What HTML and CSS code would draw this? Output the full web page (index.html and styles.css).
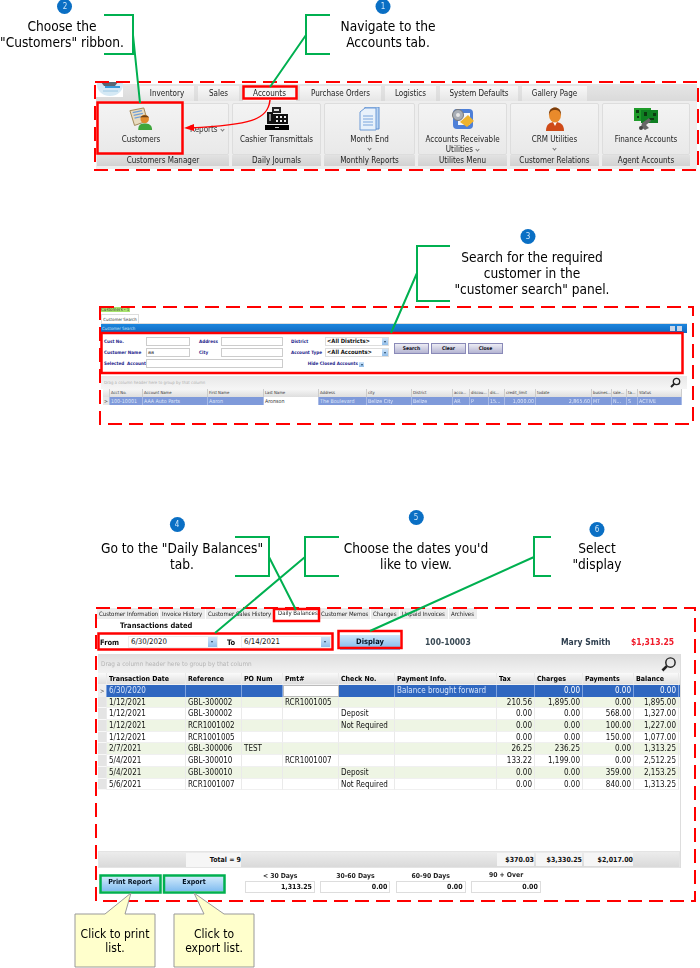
FILE: index.html
```html
<!DOCTYPE html>
<html lang="en">
<head>
<meta charset="utf-8">
<title>Customer Daily Balances</title>
<link rel="stylesheet" href="styles.css">
</head>
<body>
<main class="page">

<section class="ribbon">
  <div class="logo"><svg width="27" height="15" viewBox="0 0 27 15"><rect width="27" height="15" fill="#fff"/><ellipse cx="14" cy="3" rx="13" ry="11" fill="#d5e9f5"/><path d="M5 0h17l-3 4H8z" fill="#5a6672"/><path d="M9 5h15" stroke="#3b9ad8" stroke-width="2"/><path d="M7 9h15" stroke="#9cc7e2"/></svg></div>
  <div class="rtabs">
    <span class="rtab">Inventory</span><span class="rtab">Sales</span><span class="rtab active">Accounts</span><span class="rtab">Purchase Orders</span><span class="rtab">Logistics</span><span class="rtab">System Defaults</span><span class="rtab">Gallery Page</span>
  </div>
  <div class="groups">
    <div class="group">
      <div class="gmain split">
        <div class="gitem wide">
          <svg class="ico" viewBox="0 0 26 24"><path d="M1 3l15-3 4 14-14 5z" fill="#e9dcc0" stroke="#9c8250"/><path d="M4 5l10-2M5 8l10-2M6 11l9-2" stroke="#6f9fd8" stroke-width="1.3"/><circle cx="17" cy="12" r="4.6" fill="#e08a2c"/><path d="M12.5 11c0-4 9-4 9 0l-1-1h-7z" fill="#6d4215"/><path d="M10 24c0-6 3-7 7-7s8 1 8 7z" fill="#3fa63c"/></svg>
          <span class="glabel">Customers</span>
        </div>
        <span class="reports">Reports <i class="chev inl"></i></span>
      </div>
      <div class="gfoot">Customers Manager</div>
    </div>
    <div class="group">
      <div class="gmain"><div class="gitem">
        <svg class="ico" viewBox="0 0 24 24"><path d="M7 0h9v6H7z" fill="#222"/><path d="M9 2h5v2H9z" fill="#ddd"/><path d="M2 5h6v12H2zM8 7h15v10H8z" fill="#111"/><path d="M4 7h2v7H4z" fill="#888"/><path d="M11 9h2v2h-2zM15 9h2v2h-2zM19 9h2v2h-2zM11 13h2v2h-2zM15 13h2v2h-2zM19 13h2v2h-2z" fill="#eee"/><path d="M0 18h24v5H0z" fill="#000"/><path d="M10 20h4v1h-4z" fill="#ccc"/></svg>
        <span class="glabel">Cashier Transmittals</span>
      </div></div>
      <div class="gfoot">Daily Journals</div>
    </div>
    <div class="group">
      <div class="gmain"><div class="gitem">
        <svg class="ico" viewBox="0 0 24 24"><path d="M7 0h14v22H7z" fill="#b8d3f2" stroke="#5f8fd0"/><path d="M2 5l5-4h11v22H2z" fill="#e8f1fb" stroke="#6d9ad6"/><path d="M5 9h10M5 12h10M5 15h10M5 18h10" stroke="#7ba5dc"/></svg>
        <span class="glabel">Month End</span><i class="chev"></i>
      </div></div>
      <div class="gfoot">Monthly Reports</div>
    </div>
    <div class="group">
      <div class="gmain"><div class="gitem">
        <svg class="ico" viewBox="0 0 24 24"><rect x="2" y="2" width="20" height="20" rx="4" fill="#4d7fd8"/><rect x="7" y="6" width="12" height="12" fill="#f3f6fb"/><circle cx="7" cy="8" r="5.5" fill="#a7adb5" stroke="#777"/><circle cx="7" cy="8" r="2" fill="#e8e8e8"/><path d="M9 15l8-7 6 6-7 6z" fill="#eeb32e"/></svg>
        <span class="glabel">Accounts Receivable<br>Utilities <i class="chev inl"></i></span>
      </div></div>
      <div class="gfoot">Utilites Menu</div>
    </div>
    <div class="group">
      <div class="gmain"><div class="gitem">
        <svg class="ico" viewBox="0 0 24 24"><path d="M3 24c0-7 4-9 9-9s9 2 9 9z" fill="#cf4a18"/><path d="M10 15l2 4 2-4z" fill="#fff"/><ellipse cx="12" cy="8" rx="6" ry="7.500" fill="#e98a2b"/><path d="M6 8C5-2 19-2 18 8c-1-4-3-5-6-5S7 4 6 8z" fill="#7c3e0c"/></svg>
        <span class="glabel">CRM Utilities</span><i class="chev"></i>
      </div></div>
      <div class="gfoot">Customer Relations</div>
    </div>
    <div class="group">
      <div class="gmain"><div class="gitem">
        <svg class="ico" viewBox="0 0 24 24"><path d="M0 1h17v13H0z" fill="#1f9c2a"/><path d="M7 3h17v13H7z" fill="#0f7f22"/><path d="M2 3h3v3H2zM10 5h3v4h-3zM19 6h3v3h-3zM3 9h2v2H3zM15 11h5v2h-5z" fill="#0b3a10"/><path d="M8 16l7-5 2 3-5 4 3 3-4 2-4-3z" fill="#666"/><circle cx="7" cy="21" r="2" fill="#444"/></svg>
        <span class="glabel">Finance Accounts</span>
      </div></div>
      <div class="gfoot">Agent Accounts</div>
    </div>
  </div>
</section>

<section class="search">
  <div class="stag">Customers - 1</div>
  <div class="stabs"><span class="stab">Customer Search</span></div>
  <div class="stitle"><span>Customer Search</span><span class="wbtns"><i></i><i></i></span></div>
  <div class="sform">
    <span class="slab">Cust No.</span><span class="sinp"></span>
    <span class="slab l2">Address</span><span class="sinp"></span>
    <span class="slab l3">District</span><span class="ssel">&lt;All Districts&gt;<b class="drop"></b></span>
    <span class="slab">Customer Name</span><span class="sinp">aa</span>
    <span class="slab l2">City</span><span class="sinp"></span>
    <span class="slab l3">Account Type</span><span class="ssel">&lt;All Accounts&gt;<b class="drop"></b></span>
    <span class="slab">Selected &nbsp;Account</span><span class="sinp span3"></span>
    <span class="hide">Hide Closed Accounts <b class="drop small"></b></span>
    <div class="sbtns"><span class="sbtn">Search</span><span class="sbtn">Clear</span><span class="sbtn">Close</span></div>
  </div>
  <div class="stool"><span>Drag a column header here to group by that column</span>
    <svg class="lens" width="11" height="11" viewBox="0 0 11 11"><circle cx="6.500" cy="4.500" r="3.200" fill="none" stroke="#222" stroke-width="1.300"/><path d="M4 7l-3 3" stroke="#222" stroke-width="2"/></svg></div>
  <div class="srow shead">
    <span></span><span>Acct No.</span><span>Account Name</span><span>First Name</span><span>Last Name</span><span>Address</span><span>city</span><span>District</span><span>acco...</span><span>discou...</span><span>dis...</span><span>credit_limit</span><span>todate</span><span>busines...</span><span>sale...</span><span>ta...</span><span>Status</span>
  </div>
  <div class="srow sbody">
    <span class="rh">&gt;</span><span>100-10001</span><span>AAA Auto Parts</span><span>Aaron</span><span class="hl">Aronson</span><span>The Boulevard</span><span>Belize City</span><span>Belize</span><span>AR</span><span>P</span><span>15...</span><span class="num">1,000.00</span><span class="num">2,865.60</span><span>MT</span><span>N...</span><span>S</span><span>ACTIVE</span>
  </div>
</section>

<section class="balances">
  <div class="btabs">
    <span>Customer Information</span><span>Invoice History</span><span>Customer Sales History</span><span class="cur">Daily Balances</span><span>Customer Memos</span><span>Changes</span><span>Unpaid Invoices</span><span>Archives</span>
  </div>
  <div class="tdated">Transactions dated</div>
  <div class="filters">
    <span class="flab">From</span><span class="date">6/30/2020<b class="drop"></b></span>
    <span class="flab to">To</span><span class="date">6/14/2021<b class="drop"></b></span>
    <span class="display">Display</span>
    <span class="acct">100-10003</span>
    <span class="cname">Mary Smith</span>
    <span class="owed">$1,313.25</span>
  </div>
  <div class="grid">
    <div class="gtool"><span>Drag a column header here to group by that column</span>
      <svg class="lens big" width="16" height="16" viewBox="0 0 11 11"><circle cx="6.500" cy="4.500" r="3.200" fill="none" stroke="#222" stroke-width="1"/><path d="M4 7l-3 3" stroke="#222" stroke-width="1.800"/></svg></div>
    <div class="tr th"><span></span><span>Transaction Date</span><span>Reference</span><span>PO Num</span><span>Pmt#</span><span>Check No.</span><span>Payment Info.</span><span>Tax</span><span>Charges</span><span>Payments</span><span>Balance</span></div>
    <div class="tr sel"><span class="rh">&gt;</span><span>6/30/2020</span><span></span><span></span><span class="edit"></span><span></span><span>Balance brought forward</span><span class="num"></span><span class="num">0.00</span><span class="num">0.00</span><span class="num">0.00</span></div>
    <div class="tr alt"><span class="rh"></span><span>1/12/2021</span><span>GBL-300002</span><span></span><span>RCR1001005</span><span></span><span></span><span class="num">210.56</span><span class="num">1,895.00</span><span class="num">0.00</span><span class="num">1,895.00</span></div>
    <div class="tr"><span class="rh"></span><span>1/12/2021</span><span>GBL-300002</span><span></span><span></span><span>Deposit</span><span></span><span class="num">0.00</span><span class="num">0.00</span><span class="num">568.00</span><span class="num">1,327.00</span></div>
    <div class="tr alt"><span class="rh"></span><span>1/12/2021</span><span>RCR1001002</span><span></span><span></span><span>Not Required</span><span></span><span class="num">0.00</span><span class="num">0.00</span><span class="num">100.00</span><span class="num">1,227.00</span></div>
    <div class="tr"><span class="rh"></span><span>1/12/2021</span><span>RCR1001005</span><span></span><span></span><span></span><span></span><span class="num">0.00</span><span class="num">0.00</span><span class="num">150.00</span><span class="num">1,077.00</span></div>
    <div class="tr alt"><span class="rh"></span><span>2/7/2021</span><span>GBL-300006</span><span>TEST</span><span></span><span></span><span></span><span class="num">26.25</span><span class="num">236.25</span><span class="num">0.00</span><span class="num">1,313.25</span></div>
    <div class="tr"><span class="rh"></span><span>5/4/2021</span><span>GBL-300010</span><span></span><span>RCR1001007</span><span></span><span></span><span class="num">133.22</span><span class="num">1,199.00</span><span class="num">0.00</span><span class="num">2,512.25</span></div>
    <div class="tr alt"><span class="rh"></span><span>5/4/2021</span><span>GBL-300010</span><span></span><span></span><span>Deposit</span><span></span><span class="num">0.00</span><span class="num">0.00</span><span class="num">359.00</span><span class="num">2,153.25</span></div>
    <div class="tr"><span class="rh"></span><span>5/6/2021</span><span>RCR1001007</span><span></span><span></span><span>Not Required</span><span></span><span class="num">0.00</span><span class="num">0.00</span><span class="num">840.00</span><span class="num">1,313.25</span></div>
    <div class="gfill"></div>
    <div class="tfoot"><span class="tcount">Total = 9</span><span class="tsum t1">$370.03</span><span class="tsum t2">$3,330.25</span><span class="tsum t3">$2,017.00</span></div>
  </div>
  <div class="actions">
    <span class="abtn">Print Report</span>
    <span class="abtn">Export</span>
    <div class="aging"><span class="alab">&lt; 30 Days</span><span class="aval">1,313.25</span></div>
    <div class="aging"><span class="alab">30-60 Days</span><span class="aval">0.00</span></div>
    <div class="aging"><span class="alab">60-90 Days</span><span class="aval">0.00</span></div>
    <div class="aging"><span class="alab up">90 + Over</span><span class="aval">0.00</span></div>
  </div>
</section>

</main>

<svg class="marks" width="700" height="968" viewBox="0 0 700 968">
  <g fill="none" stroke="#f00" stroke-width="2" stroke-dasharray="14 7">
    <rect x="95" y="82" width="603" height="88"/>
    <rect x="100" y="307" width="593" height="117"/>
    <rect x="96" y="608" width="599" height="293"/>
  </g>
  <g fill="none" stroke="#f00" stroke-width="2.500">
    <rect x="97.500" y="102.500" width="85" height="51"/>
    <rect x="243.500" y="86.500" width="53" height="12"/>
    <rect x="101.500" y="333" width="581" height="40"/>
    <rect x="274" y="609" width="45" height="12"/>
    <rect x="98.500" y="633.500" width="234" height="16"/>
    <rect x="338.500" y="631" width="63" height="17"/>
  </g>
  <path d="M270 100C268 120 250 125 190 128" fill="none" stroke="#f00" stroke-width="1.500"/>
  <path d="M184 128l10-4v7z" fill="#f00"/>
  <g fill="none" stroke="#00b050" stroke-width="2">
    <path d="M104 15h29v39h-29M133 35l7 68"/>
    <path d="M330 15h-24v39h24M306 35l-36 52"/>
    <path d="M450 246h-33v55h33M417 273l-26 60"/>
    <path d="M235 537h34v39h-34M269 557l27 53"/>
    <path d="M339 537h-34v39h34M305 557l-90 76"/>
    <path d="M551 537h-17v39h17M534 557l-164 74"/>
  </g>
  <g fill="none" stroke="#00b050" stroke-width="2.500">
    <rect x="100.500" y="875.500" width="60" height="17"/>
    <rect x="164" y="875.500" width="60.500" height="17"/>
  </g>
  <g fill="#ffc" stroke="#999">
    <path d="M75 967V914h30l26-21-6 21h30v53z"/>
    <path d="M174 967V914h30l-10-21 30 21h30v53z"/>
  </g>
</svg>

<div class="note n2"><b class="badge">2</b>Choose the<br>"Customers" ribbon.</div>
<div class="note n1"><b class="badge">1</b>Navigate to the<br>Accounts tab.</div>
<div class="note n3"><b class="badge">3</b>Search for the required<br>customer in the<br>"customer search" panel.</div>
<div class="note n4"><b class="badge">4</b>Go to the "Daily Balances"<br>tab.</div>
<div class="note n5"><b class="badge">5</b>Choose the dates you'd<br>like to view.</div>
<div class="note n6"><b class="badge">6</b>Select<br>"display</div>
<div class="tip t1">Click to print<br>list.</div>
<div class="tip t2">Click to<br>export list.</div>
</body>
</html>
```

FILE: styles.css
```css
* { box-sizing: border-box; }
html, body { margin: 0; padding: 0; background: #fff; }
body { position: relative; width: 700px; height: 968px; overflow: hidden; font-family: "DejaVu Sans Condensed", "DejaVu Sans", sans-serif; color: #111; }
.page { display: flex; flex-direction: column; }
.page span, .page div { min-width: 0; }

/* ribbon */
.ribbon { position: relative; margin: 84px 0 0 96px; width: 601px; height: 85px; background: #eee; filter: blur(.35px); }
.logo { position: absolute; left: 0; top: -2px; width: 27px; height: 15px; overflow: hidden; }
.rtabs { height: 17px; padding-left: 44px; display: grid; grid-template-columns: 58px 45px 57px 85px 55px 82px 65px; background: linear-gradient(#e6e6e6, #dadada); align-items: end; }
.rtab { height: 15px; margin-right: 4px; background: linear-gradient(#f8f8f8, #e6e6e6); font-size: 8px; line-height: 15px; text-align: center; color: #222; white-space: nowrap; }
.rtab:last-child { margin-right: 0; }
.rtab.active { background: #f6f6f6; }
.groups { display: grid; grid-template-columns: 135px 92px 94px 92px 92px 91px; padding: 2px 0 0 1px; background: #eee; }
.group { margin-right: 3px; height: 63px; display: flex; flex-direction: column; }
.gmain { height: 52px; background: linear-gradient(#f3f3f3, #e9e9e9); border: 1px solid #ddd; border-radius: 2px; }
.gmain.split { display: flex; align-items: center; }
.gitem { height: 100%; display: flex; flex-direction: column; align-items: center; padding-top: 3px; font-size: 8px; line-height: 9.500px; color: #222; text-align: center; }
.gitem.wide { width: 86px; flex: none; }
.ico { width: 24px; height: 24px; flex: none; }
.glabel { margin-top: 4px; white-space: nowrap; }
.chev { display: block; width: 3px; height: 3px; margin-top: 2px; border-right: 1px solid #777; border-bottom: 1px solid #777; transform: rotate(45deg); }
.chev.inl { display: inline-block; margin: 0 0 1px 1px; }
.reports { font-size: 8px; margin: 0 0 0 6px; color: #333; white-space: nowrap; }
.gfoot { height: 11px; background: linear-gradient(#e2e2e2, #d2d2d2); font-size: 8px; line-height: 11px; text-align: center; color: #222; white-space: nowrap; }

/* search panel */
.search { margin: 139px 0 0 101px; width: 586px; height: 96px; position: relative; background: #fff; filter: blur(.35px); }
.stag { position: absolute; left: 0; top: -1px; width: 29px; height: 5px; background: #a7e36b; font-size: 4.500px; line-height: 5px; color: #444; overflow: hidden; white-space: nowrap; }
.stabs { height: 16px; padding-top: 6px; border-bottom: 1px solid #ddd; display: flex; }
.stab { width: 38px; height: 10px; font-size: 4.300px; line-height: 9px; text-align: center; border: 1px solid #ddd; border-bottom: 0; color: #333; white-space: nowrap; }
.stitle { height: 9px; padding: 0 5px 0 1px; display: flex; justify-content: space-between; align-items: center; background: linear-gradient(#1c86de, #0f69c0); font-size: 4.300px; color: #cfe4f8; }
.wbtns { display: flex; gap: 2px; }
.wbtns i { width: 5px; height: 5px; background: #c9d6e6; }
.sform { height: 41px; padding: 3px 0 0 3px; display: grid; grid-template-columns: 42px 44px 31px 62px 42px 64px; grid-template-rows: 11px 11px 11px; align-items: center; position: relative; }
.slab { font-size: 4.600px; font-weight: 700; color: #1c1c8a; white-space: nowrap; }
.slab.l2 { padding-left: 9px; }
.slab.l3 { padding-left: 8px; }
.sinp { height: 9.500px; border: 1px solid #ccc; background: #fff; font-size: 5.500px; line-height: 7px; padding-left: 1px; color: #333; }
.span3 { grid-column: 2 / 5; }
.ssel { position: relative; height: 9px; background: #fff; border: 1px solid #ddd; font-size: 5.800px; font-weight: 700; line-height: 7px; padding-left: 1px; color: #111; white-space: nowrap; }
.drop { position: absolute; right: 0; top: 0; bottom: 0; width: 6px; background: linear-gradient(#cfe5fa, #8fbdea); }
.drop::after { content: ""; position: absolute; left: 1.500px; top: 40%; border: 1.500px solid transparent; border-top: 2px solid #246; border-bottom: 0; }
.hide { grid-column: 5 / 7; position: relative; text-align: right; padding-right: 31px; font-size: 4.600px; font-weight: 700; color: #1c1c8a; white-space: nowrap; }
.drop.small { width: 5px; height: 5px; top: 1px; bottom: auto; right: 25px; }
.sbtns { position: absolute; left: 293px; top: 10px; display: flex; gap: 2px; }
.sbtn { width: 35px; height: 11px; background: linear-gradient(#ececf4, #b4b4d2); border: 1px solid #8a8ab8; font-size: 5px; font-weight: 700; line-height: 9px; text-align: center; color: #112; }
.stool { height: 13px; margin-top: 2px; background: linear-gradient(#e8e8e8, #f5f5f5); display: flex; justify-content: space-between; align-items: center; padding: 0 6px 0 3px; font-size: 4.300px; color: #b0b0b0; }
.srow { display: grid; grid-template-columns: 7px 33px 65px 56px 55px 48px 45px 41px 17px 19px 16px 31px 56px 20px 15px 11px 44px; margin-left: 2px; width: 579px; }
.srow span { overflow: hidden; white-space: nowrap; padding-left: 1px; }
.shead { height: 8px; background: linear-gradient(#f6f6f6, #dedede); font-size: 4.200px; line-height: 8px; color: #333; }
.shead span { border-right: 1px solid #ccc; }
.sbody { height: 8px; background: #7f9ada; font-size: 5.300px; line-height: 8px; color: #dfe7fa; }
.sbody span { border-right: 1px solid #a8bae6; }
.sbody .rh { background: #e6e6e6; color: #333; }
.sbody .hl { background: #fff; color: #333; }
.num { text-align: right; padding-right: 1px; }

/* balances */
.balances { margin: 204px 0 0 97px; width: 597px; height: 292px; position: relative; filter: blur(.35px); }
.btabs { height: 11px; display: grid; grid-template-columns: 63px 46px 68px 45px 52px 29px 49px 29px; font-size: 6px; line-height: 11px; color: #222; white-space: nowrap; }
.btabs span { background: #ececec; padding-left: 2px; margin-right: 1px; }
.btabs span.cur { background: #fff; padding-left: 4px; line-height: 10px; }
.tdated { margin: 2px 0 0 23px; height: 10px; font-size: 7.500px; font-weight: 700; line-height: 10px; color: #111; }
.filters { margin-top: 4px; height: 14px; display: flex; align-items: center; position: relative; }
.flab { width: 31px; padding-left: 3px; font-size: 7.500px; font-weight: 700; color: #111; }
.flab.to { width: 14px; padding-left: 0; margin-left: 9px; }
.date { position: relative; width: 90px; height: 12px; background: #fff; border: 1px solid #eee; font-size: 7.800px; line-height: 10px; padding-left: 2px; color: #111; }
.date .drop { width: 9px; }
.date .drop::after { left: 2.500px; }
.display { margin-left: 9px; width: 60px; height: 15px; background: linear-gradient(#cde6fb, #79b6ec); font-size: 7.500px; font-weight: 700; line-height: 14px; text-align: center; color: #012; }
.acct { margin-left: 25px; width: 136px; font-size: 8.500px; font-weight: 700; color: #3a4a55; }
.cname { width: 70px; font-size: 8.500px; font-weight: 700; color: #2f3f4f; }
.owed { font-size: 8.500px; font-weight: 700; color: #f01a2a; }
.grid { margin: 5px 0 0 1px; width: 583px; height: 214px; border-right: 1px solid #ddd; display: flex; flex-direction: column; }
.gtool { height: 19px; flex: none; background: linear-gradient(#dedede, #f2f2f2); display: flex; justify-content: space-between; align-items: center; padding: 0 3px; font-size: 6.400px; color: #b5b5b5; }
.tr { display: grid; grid-template-columns: 9px 79px 56px 41px 56px 56px 102px 38px 48px 51px 45px; height: 11.700px; flex: none; font-size: 8px; line-height: 11.500px; color: #111; background: #fff; }
.tr span { overflow: hidden; white-space: nowrap; padding-left: 2px; border-right: 1px solid #eaeaea; border-bottom: 1px solid #f0f0f0; }
.tr .num { padding: 0 2px 0 0; }
.tr .rh { background: #e4e4e4; font-size: 6px; padding-left: 2px; border-bottom: 1px solid #f8f8f8; }
.tr.alt { background: #eef5e4; }
.tr.th { height: 12px; background: linear-gradient(#fafafa, #dcdcdc); font-size: 7px; font-weight: 700; line-height: 12px; color: #000; }
.tr.sel { background: #2f67c0; color: #d6e4fa; }
.tr.sel span { border-right: 1px solid #7ea3de; border-bottom: 0; }
.tr.sel .num { color: #fff; }
.tr.sel .rh { color: #444; background: #eee; }
.tr.sel .edit { background: #fff; border: 1px solid #bbb; }
.gfill { flex: 1; background: #fff; }
.tfoot { height: 17px; flex: none; position: relative; background: linear-gradient(#ececec, #dadada); border: 1px solid #e4e4e4; font-size: 7px; font-weight: 700; line-height: 14px; color: #111; display: flex; padding: 1px 0 0 87px; }
.tcount { width: 55px; text-align: right; background: #f6f6f6; }
.tsum { background: #f6f6f6; text-align: right; height: 13px; }
.tsum.t1 { margin-left: 256px; width: 37px; }
.tsum.t2 { margin-left: 2px; width: 46px; }
.tsum.t3 { margin-left: 2px; width: 49px; }
.actions { margin: 7px 0 0 3px; display: flex; align-items: flex-start; }
.abtn { width: 60px; height: 16px; margin-right: 4px; background: linear-gradient(#d9eefc, #82bdf0); font-size: 7px; font-weight: 700; line-height: 15px; text-align: center; color: #012; }
.abtn + .abtn { margin-right: 21px; }
.aging { width: 75.300px; display: flex; flex-direction: column; position: relative; }
.alab { height: 8px; margin-top: -2px; font-size: 6.800px; font-weight: 700; line-height: 6px; text-align: center; color: #222; padding-right: 5px; }
.alab.up { position: relative; top: -1px; }
.aval { width: 70px; height: 12px; border: 1px solid #ddd; background: #fff; font-size: 7px; font-weight: 700; line-height: 10px; text-align: right; padding-right: 2px; color: #111; }

/* annotations */
.marks { position: absolute; left: 0; top: 0; pointer-events: none; filter: blur(.25px); }
.note { position: absolute; font-size: 13.600px; line-height: 16px; color: #000; text-align: center; white-space: nowrap; transform: translateX(-50%); }
.badge { position: absolute; left: 50%; top: -19px; width: 15px; height: 15px; margin-left: -7.500px; border-radius: 50%; background: #0a6fc4; color: #cfe6fa; font-size: 8px; font-weight: 400; line-height: 15px; text-align: center; }
.n2 { left: 62px; top: 18px; }
.n1 { left: 388px; top: 18px; }
.n3 { left: 532px; top: 249px; }
.n4 { left: 182px; top: 540px; }
.n5 { left: 416px; top: 540px; }
.n6 { left: 597px; top: 540px; }
.n2 .badge { margin-left: -4.500px; }
.n1 .badge { margin-left: -12.500px; }
.n3 .badge { top: -20px; margin-left: -11.500px; }
.n4 .badge { top: -23px; margin-left: -12.500px; }
.n5 .badge { top: -30px; }
.n6 .badge { top: -18px; }
.tip { position: absolute; top: 927px; width: 80px; font-size: 12px; line-height: 14px; text-align: center; color: #000; }
.tip.t1 { left: 75px; }
.tip.t2 { left: 174px; }
```
